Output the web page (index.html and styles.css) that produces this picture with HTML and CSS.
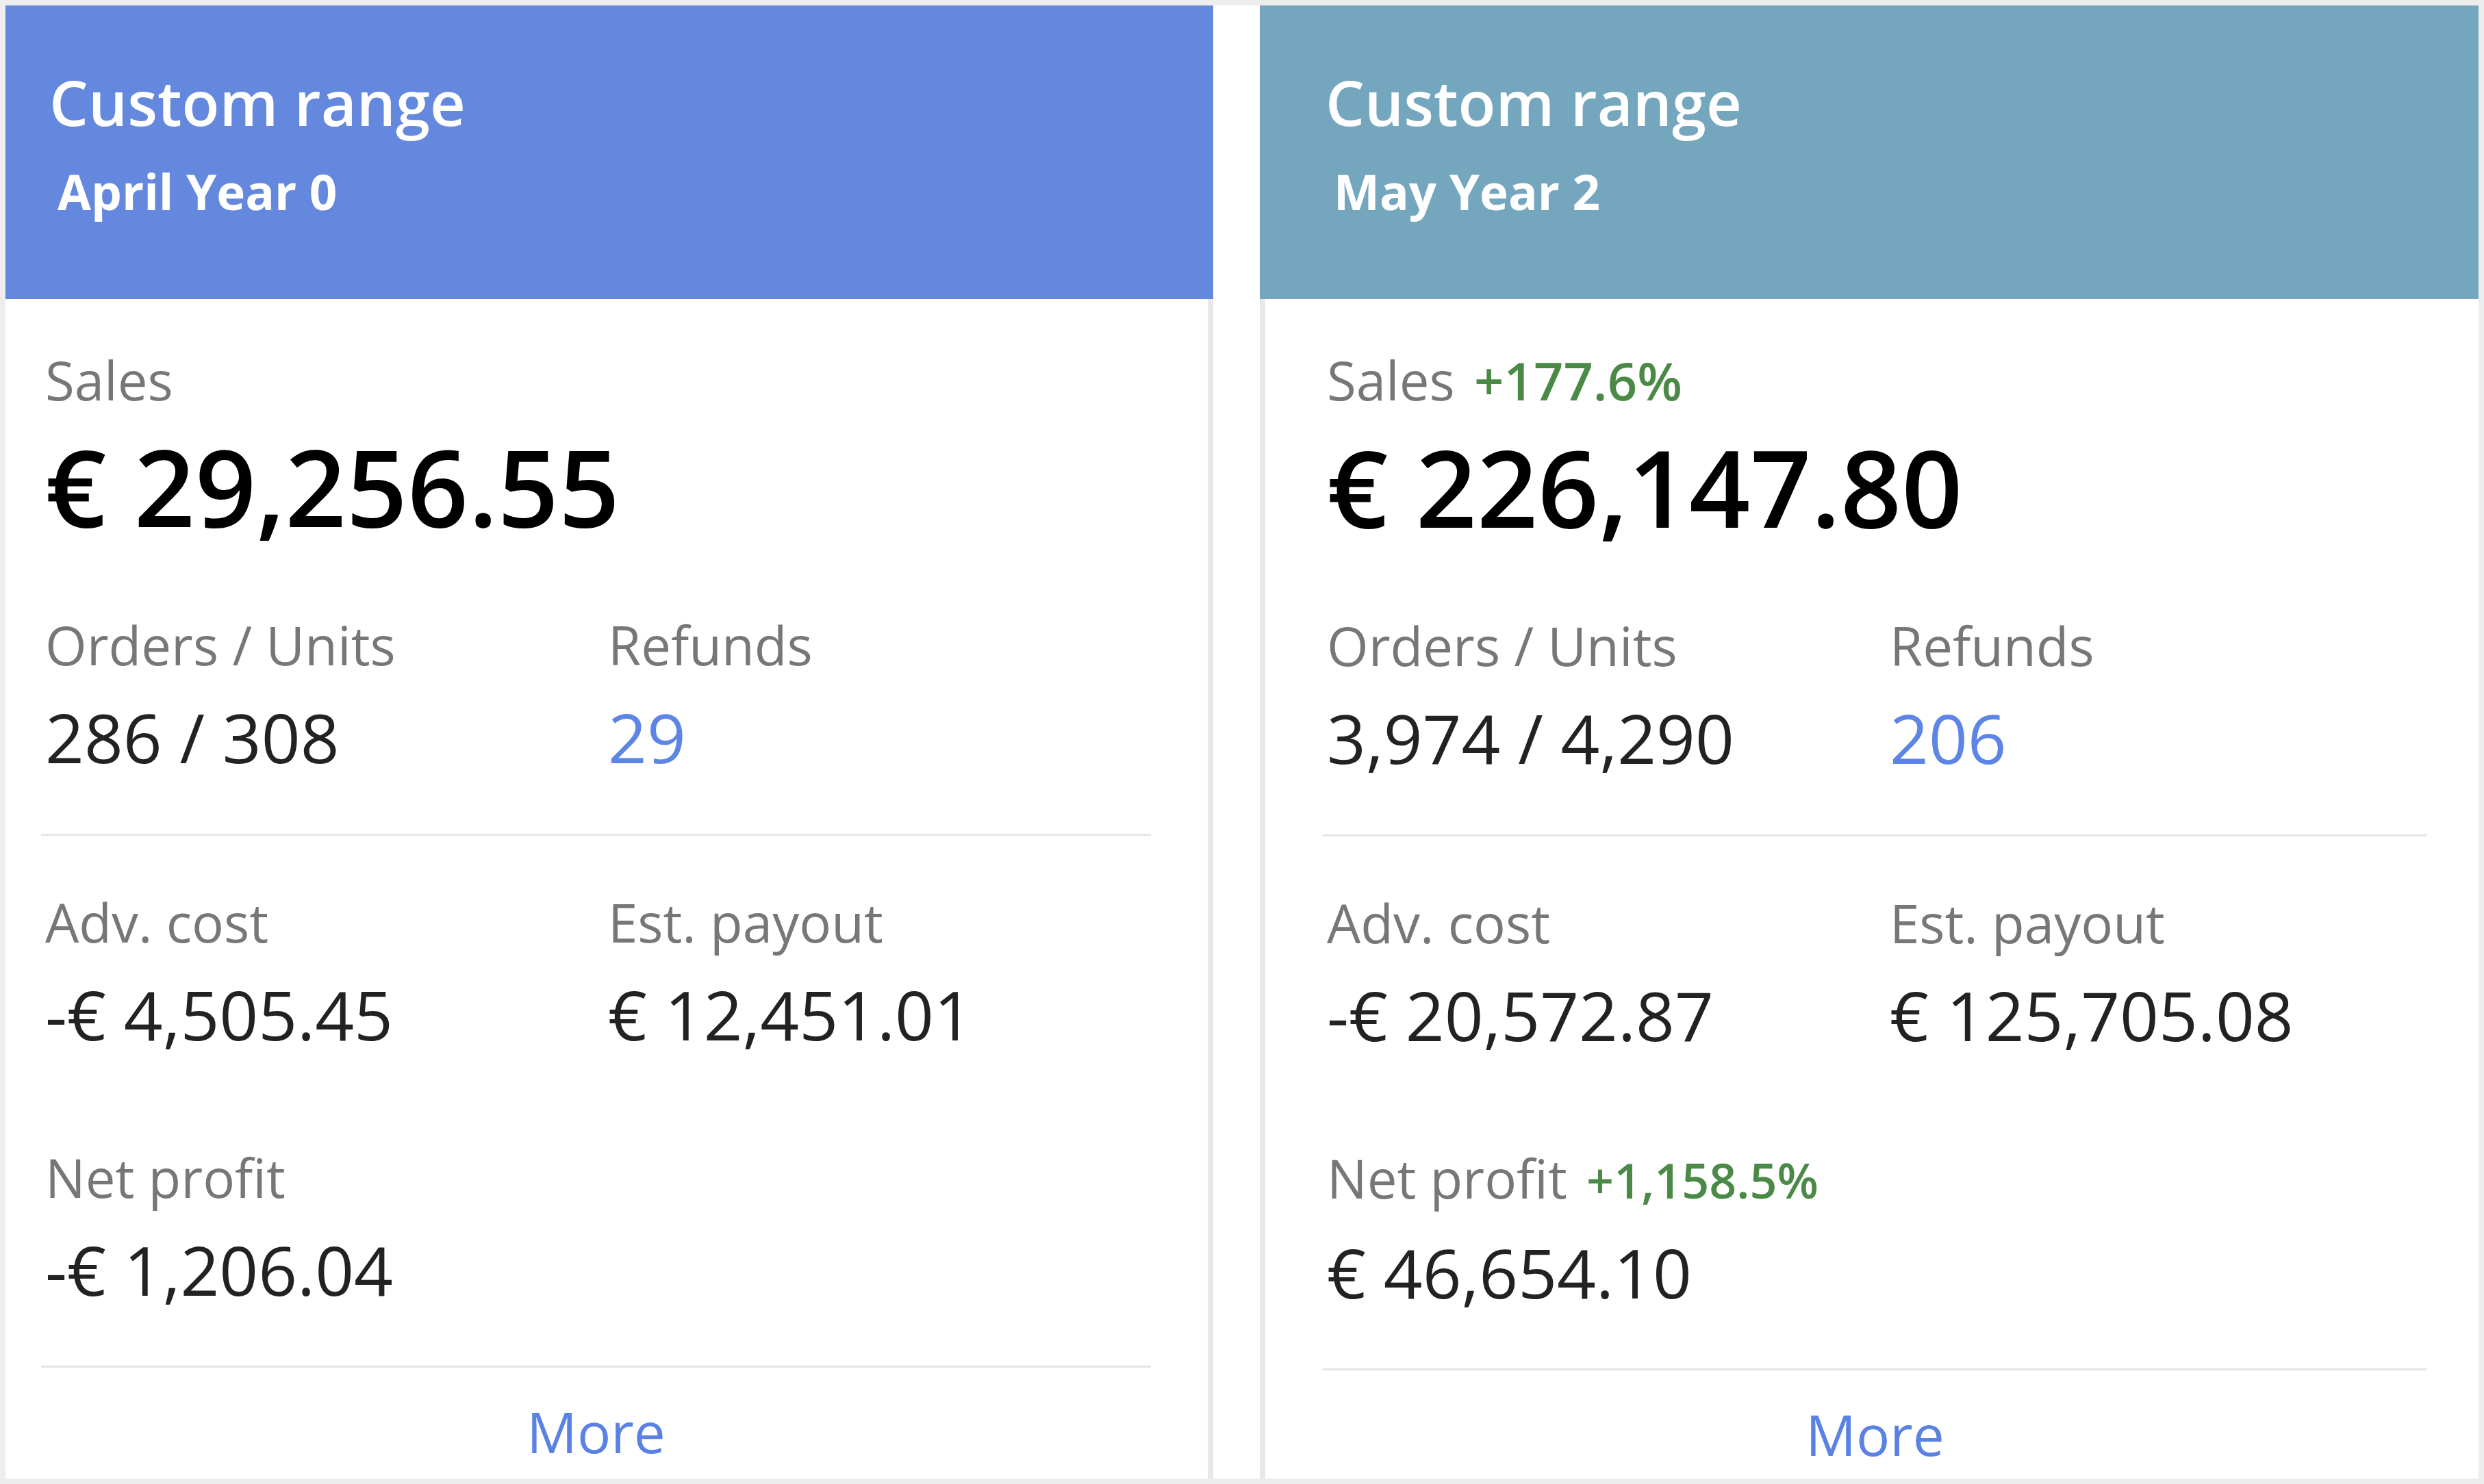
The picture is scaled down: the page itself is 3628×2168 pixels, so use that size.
FILE: index.html
```html
<!DOCTYPE html>
<html lang="en">
<head>
    <meta charset="UTF-8">
    <meta name="viewport" content="width=device-width, initial-scale=1.0">
    <title>Custom range comparison</title>
    <link rel="stylesheet" href="styles.css">
</head>
<body>
    <div class="board">
        <section class="card card-first">
            <header class="card-header header-blue">
                <h1>Custom range</h1>
                <div class="period">April Year 0</div>
            </header>
            <div class="card-body">
                <div class="metric sales">
                    <div class="label">Sales</div>
                    <div class="value big">€ 29,256.55</div>
                </div>
                <div class="row first-row">
                    <div class="metric">
                        <div class="label">Orders / Units</div>
                        <div class="value">286 / 308</div>
                    </div>
                    <div class="metric">
                        <div class="label">Refunds</div>
                        <div class="value link">29</div>
                    </div>
                </div>
                <div class="divider"></div>
                <div class="row second-row">
                    <div class="metric">
                        <div class="label">Adv. cost</div>
                        <div class="value">-€ 4,505.45</div>
                    </div>
                    <div class="metric">
                        <div class="label">Est. payout</div>
                        <div class="value">€ 12,451.01</div>
                    </div>
                </div>
                <div class="row third-row">
                    <div class="metric">
                        <div class="label">Net profit</div>
                        <div class="value">-€ 1,206.04</div>
                    </div>
                </div>
                <div class="divider bottom"></div>
                <a class="more" href="#">More</a>
            </div>
        </section>

        <section class="card card-second">
            <header class="card-header header-teal">
                <h1>Custom range</h1>
                <div class="period">May Year 2</div>
            </header>
            <div class="card-body">
                <div class="metric sales">
                    <div class="label">Sales <span class="delta">+177.6%</span></div>
                    <div class="value big">€ 226,147.80</div>
                </div>
                <div class="row first-row">
                    <div class="metric">
                        <div class="label">Orders / Units</div>
                        <div class="value">3,974 / 4,290</div>
                    </div>
                    <div class="metric">
                        <div class="label">Refunds</div>
                        <div class="value link">206</div>
                    </div>
                </div>
                <div class="divider"></div>
                <div class="row second-row">
                    <div class="metric">
                        <div class="label">Adv. cost</div>
                        <div class="value">-€ 20,572.87</div>
                    </div>
                    <div class="metric">
                        <div class="label">Est. payout</div>
                        <div class="value">€ 125,705.08</div>
                    </div>
                </div>
                <div class="row third-row">
                    <div class="metric">
                        <div class="label">Net profit <span class="delta small">+1,158.5%</span></div>
                        <div class="value">€ 46,654.10</div>
                    </div>
                </div>
                <div class="divider bottom"></div>
                <a class="more" href="#">More</a>
            </div>
        </section>
    </div>
</body>
</html>
```

FILE: styles.css
```css
html, body {
    height: 100%;
}

body {
    margin: 0;
    padding: 8px;
    box-sizing: border-box;
    background-color: #ededed;
    font-family: "Open Sans", "Noto Sans", sans-serif;
}

.board {
    display: grid;
    grid-template-columns: 1764px 1780px;
    column-gap: 68px;
    height: 100%;
    background-color: #ffffff;
}

.card {
    display: flex;
    flex-direction: column;
}

/* header */
.card-header {
    height: 429px;
    box-sizing: border-box;
    padding-top: 80px;
    color: #ffffff;
}

.card-first .card-header {
    padding-left: 64px;
}

.card-second .card-header {
    padding-left: 96px;
}

.header-blue {
    background-color: #6488dd;
}

.header-teal {
    background-color: #74a6bd;
}

.card-header h1 {
    margin: 0;
    font-size: 90px;
    font-weight: 600;
    line-height: 122px;
}

.period {
    margin: 22px 0 0 12px;
    font-size: 71px;
    font-weight: 700;
    line-height: 95px;
}

/* body */
.card-body {
    flex: 1;
    display: flex;
    flex-direction: column;
    padding-top: 63px;
}

.card-first .card-body {
    padding-left: 52px;
    padding-right: 83px;
    border-right: 8px solid #e8e8e8;
}

.card-second .card-body {
    padding-left: 84px;
    padding-right: 75px;
    border-left: 8px solid #e8e8e8;
}

.metric {
    padding-left: 6px;
}

.label {
    font-size: 78px;
    line-height: 110px;
    color: #777777;
    white-space: nowrap;
}

.delta {
    margin-left: 8px;
    font-size: 76px;
    font-weight: 600;
    color: #4a8a46;
}

.delta.small {
    font-size: 70px;
}

.value {
    margin-top: 15px;
    font-size: 99.5px;
    line-height: 130px;
    color: #222222;
    white-space: nowrap;
}

.value.big {
    margin-top: 15px;
    font-size: 156px;
    font-weight: 600;
    line-height: 170px;
    color: #000000;
}

.value.link {
    color: #5d85e6;
}

.row {
    display: grid;
    grid-template-columns: 822px 1fr;
}

.first-row {
    margin-top: 92px;
}

.second-row {
    margin-top: 71px;
}

.third-row {
    margin-top: 118px;
}

.divider {
    height: 3px;
    margin-top: 76px;
    background-color: #e6e6e6;
}

.divider.bottom {
    margin-top: 75px;
}

.more {
    margin-top: 38px;
    font-size: 82px;
    line-height: 110px;
    color: #5a82e4;
    text-align: center;
    text-decoration: none;
}
```
